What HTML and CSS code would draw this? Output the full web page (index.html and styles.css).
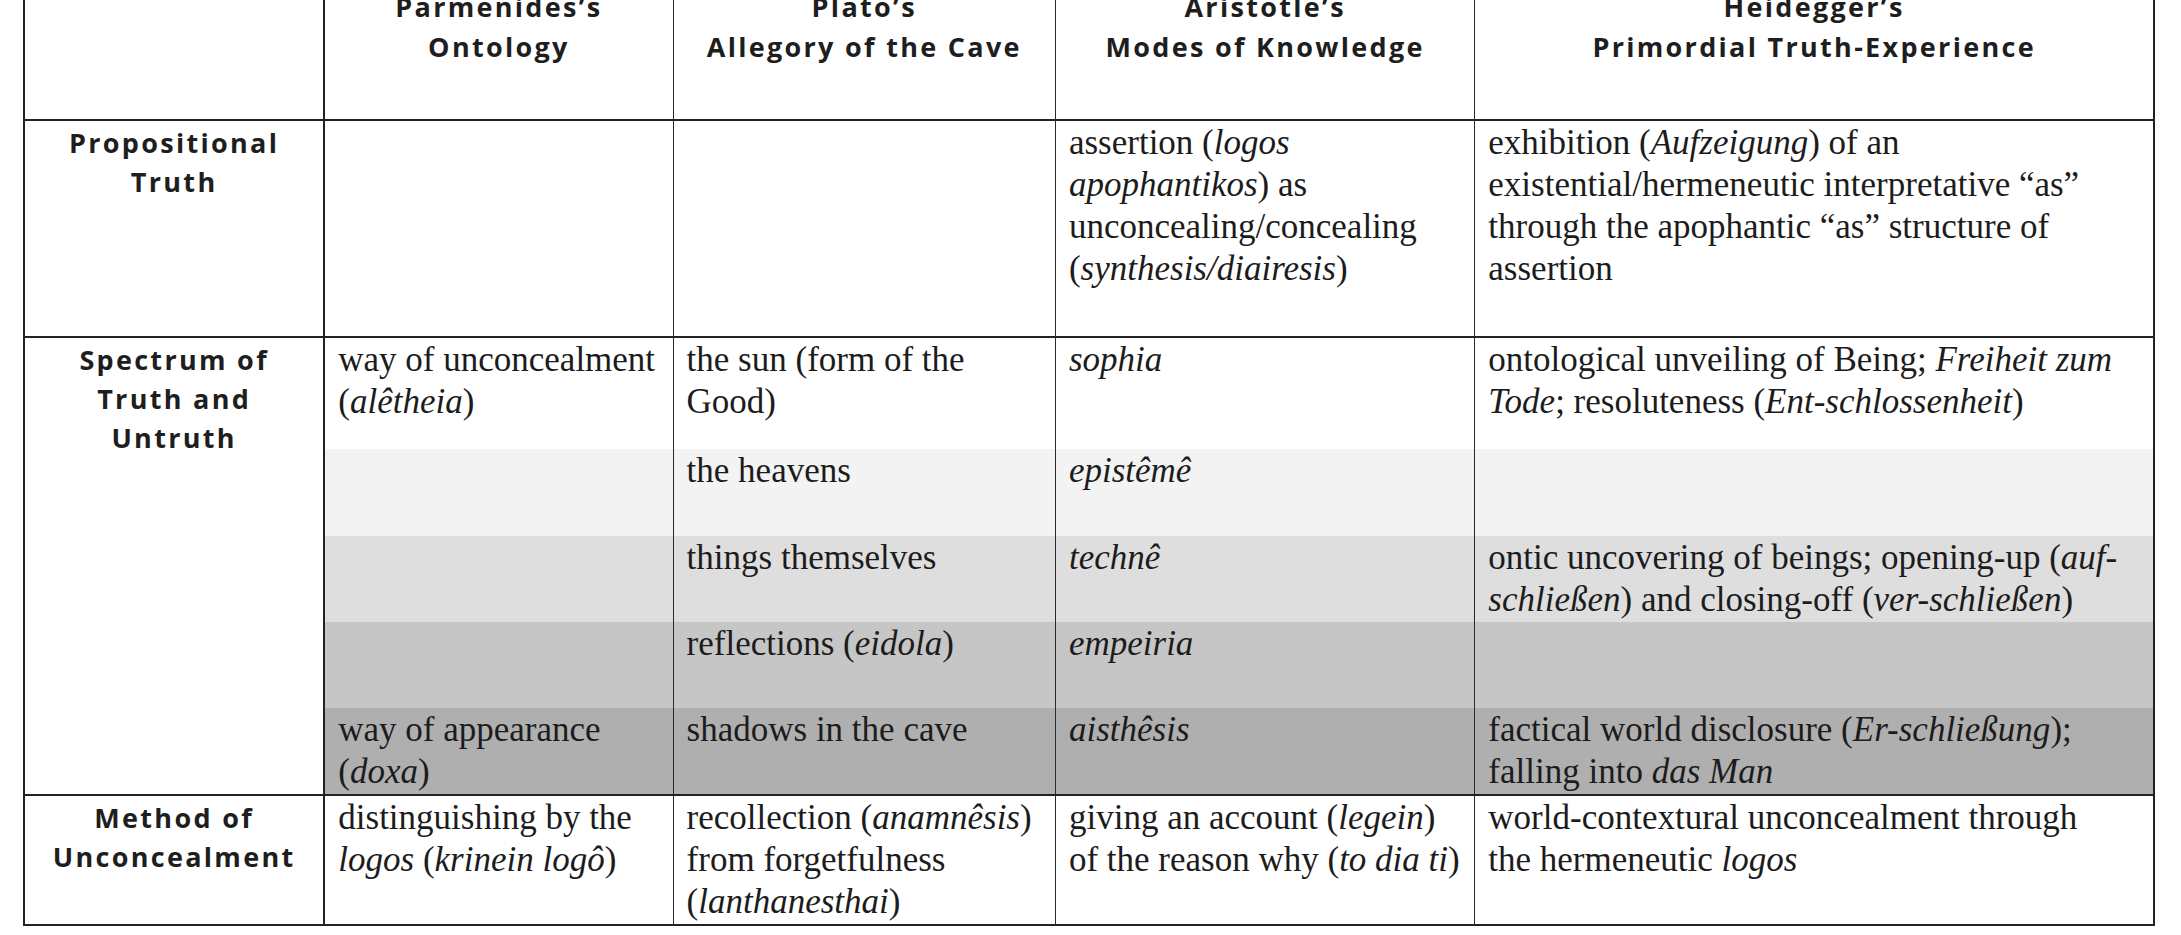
FILE: index.html
```html
<!DOCTYPE html>
<html lang="en">
<head>
<meta charset="utf-8">
<title>Truth table</title>
<link rel="stylesheet" href="styles.css">
</head>
<body>
<table class="grid">
  <thead>
    <tr class="r-head">
      <th class="w1 label-col"></th>
      <th class="w2">Parmenides’s<br>Ontology</th>
      <th class="w3">Plato’s<br>Allegory of the Cave</th>
      <th class="w4">Aristotle’s<br>Modes of Knowledge</th>
      <th class="w5 last">Heidegger’s<br>Primordial Truth-Experience</th>
    </tr>
  </thead>
  <tbody>
    <tr class="r-prop major">
      <td class="label">Propositional<br>Truth</td>
      <td></td>
      <td></td>
      <td>assertion (<i>logos</i><br><i>apophantikos</i>) as<br>unconcealing/concealing<br>(<i>synthesis/diairesis</i>)</td>
      <td class="last">exhibition (<i>Aufzeigung</i>) of an<br>existential/hermeneutic interpretative “as”<br>through the apophantic “as” structure of<br>assertion</td>
    </tr>
    <tr class="r-s1 shade-0">
      <td class="label span" rowspan="5">Spectrum of<br>Truth and<br>Untruth</td>
      <td>way of unconcealment<br>(<i>alêtheia</i>)</td>
      <td>the sun (form of the<br>Good)</td>
      <td><i>sophia</i></td>
      <td class="last">ontological unveiling of Being; <i>Freiheit zum</i><br><i>Tode</i>; resoluteness (<i>Ent-schlossenheit</i>)</td>
    </tr>
    <tr class="r-s2 shade-1">
      <td></td>
      <td>the heavens</td>
      <td><i>epistêmê</i></td>
      <td class="last"></td>
    </tr>
    <tr class="r-s3 shade-2">
      <td></td>
      <td>things themselves</td>
      <td><i>technê</i></td>
      <td class="last">ontic uncovering of beings; opening-up (<i>auf-</i><br><i>schließen</i>) and closing-off (<i>ver-schließen</i>)</td>
    </tr>
    <tr class="r-s4 shade-3">
      <td></td>
      <td>reflections (<i>eidola</i>)</td>
      <td><i>empeiria</i></td>
      <td class="last"></td>
    </tr>
    <tr class="r-s5 shade-4 major">
      <td>way of appearance<br>(<i>doxa</i>)</td>
      <td>shadows in the cave</td>
      <td><i>aisthêsis</i></td>
      <td class="last">factical world disclosure (<i>Er-schließung</i>);<br>falling into <i>das Man</i></td>
    </tr>
    <tr class="r-method major">
      <td class="label">Method of<br>Unconcealment</td>
      <td>distinguishing by the<br><i>logos</i> (<i>krinein logô</i>)</td>
      <td>recollection (<i>anamnêsis</i>)<br>from forgetfulness<br>(<i>lanthanesthai</i>)</td>
      <td>giving an account (<i>legein</i>)<br>of the reason why (<i>to dia ti</i>)</td>
      <td class="last">world-contextural unconcealment through<br>the hermeneutic <i>logos</i></td>
    </tr>
  </tbody>
</table>
</body>
</html>
```

FILE: styles.css
```css
html, body {
  margin: 0;
  padding: 0;
  background: #ffffff;
}

body {
  overflow: hidden;
}

.grid {
  margin: -20px 0 0 23px;
  width: 2132px;
  table-layout: fixed;
  border-collapse: separate;
  border-spacing: 0;
  border-left: 2px solid #222222;
  border-top: 2px solid #222222;
  color: #1c1c1c;
}

.grid th,
.grid td {
  box-sizing: border-box;
  border-right: 1px solid #2a2a2a;
  padding: 1px 6px 0 13px;
  vertical-align: top;
  text-align: left;
  font-family: "Liberation Serif", "Times New Roman", serif;
  font-size: 35px;
  line-height: 42px;
  font-weight: 400;
  color: #1c1c1c;
}

.grid i {
  font-style: italic;
}

.grid .last {
  border-right: 2px solid #222222;
}

.w1 { width: 300px; }
.w2 { width: 348px; }
.w3 { width: 382px; }
.w4 { width: 419px; }
.w5 { width: 679px; }

/* header */
.r-head { height: 139px; }

.grid th {
  font-family: "Open Sans", "DejaVu Sans", sans-serif;
  font-weight: 700;
  font-size: 27px;
  line-height: 40px;
  letter-spacing: 2.3px;
  text-align: center;
  padding: 5px 0 0 0;
  border-bottom: 2px solid #222222;
  color: #1e1e1e;
}

.grid th.label-col,
.grid td.label {
  border-right: 2px solid #222222;
}

/* row labels */
.grid td.label {
  font-family: "Open Sans", "DejaVu Sans", sans-serif;
  font-weight: 700;
  font-size: 27px;
  line-height: 39px;
  letter-spacing: 2.3px;
  text-align: center;
  padding: 2px 0 0 0;
  background: #ffffff;
  color: #1e1e1e;
}

.grid td.span {
  border-bottom: 2px solid #222222;
}

.major > td {
  border-bottom: 2px solid #222222;
}

/* row heights */
.r-prop { height: 217px; }
.r-s1 { height: 111px; }
.r-s2 { height: 87px; }
.r-s3 { height: 86px; }
.r-s4 { height: 86px; }
.r-s5 { height: 88px; }
.r-method { height: 130px; }

/* spectrum shading */
.shade-0 > td { background: #ffffff; }
.shade-1 > td { background: #f3f3f3; }
.shade-2 > td { background: #dedede; }
.shade-3 > td { background: #c6c6c6; }
.shade-4 > td { background: #afafaf; }
```
